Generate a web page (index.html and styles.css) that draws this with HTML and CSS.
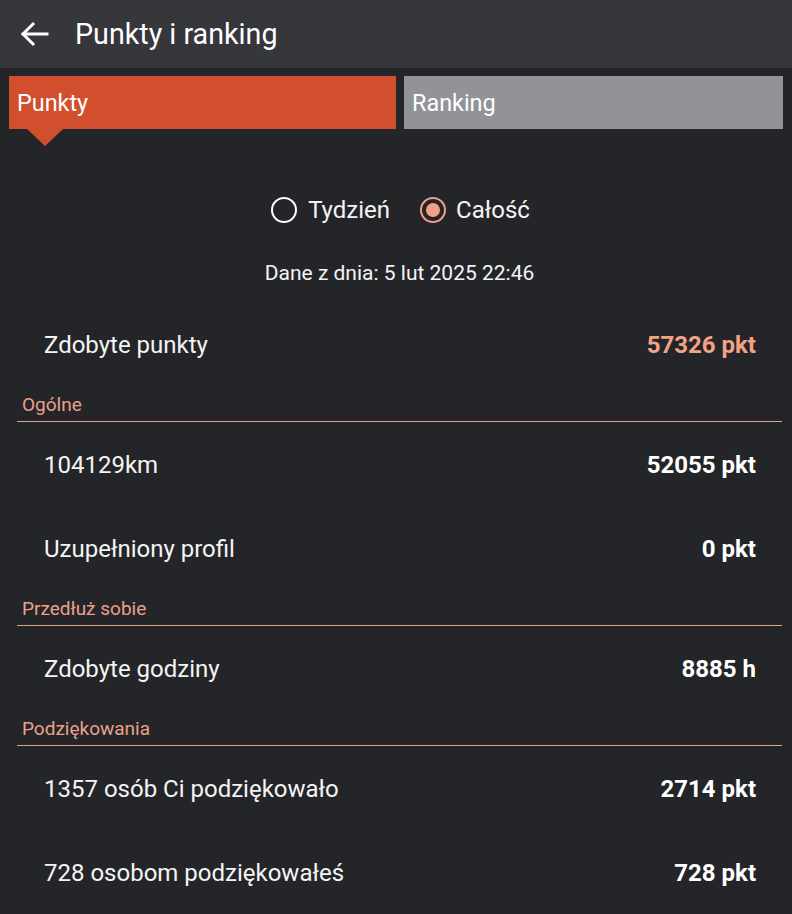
FILE: index.html
```html
<!DOCTYPE html>
<html lang="pl">
<head>
<meta charset="utf-8">
<link rel="stylesheet" href="styles.css">
</head>
<body>
<header class="appbar">
  <svg class="back" width="32" height="32" viewBox="0 0 32 32"><path d="M29 16H5M15 6L5 16l10 10" fill="none" stroke="#fff" stroke-width="3" stroke-linecap="square"/></svg>
  <h1 class="title">Punkty i ranking</h1>
</header>
<nav class="tabs">
  <div class="tab active">Punkty</div>
  <div class="tab">Ranking</div>
</nav>
<div class="radios">
  <label class="radio"><span class="circle"></span>Tydzień</label>
  <label class="radio checked"><span class="circle"></span>Całość</label>
</div>
<p class="date">Dane z dnia: 5 lut 2025 22:46</p>
<div class="row total"><span class="label">Zdobyte punkty</span><span class="value">57326 pkt</span></div>
<div class="section">Ogólne</div>
<div class="row"><span class="label">104129km</span><span class="value">52055 pkt</span></div>
<div class="row"><span class="label">Uzupełniony profil</span><span class="value">0 pkt</span></div>
<div class="section">Przedłuż sobie</div>
<div class="row"><span class="label">Zdobyte godziny</span><span class="value">8885 h</span></div>
<div class="section">Podziękowania</div>
<div class="row"><span class="label">1357 osób Ci podziękowało</span><span class="value">2714 pkt</span></div>
<div class="row"><span class="label">728 osobom podziękowałeś</span><span class="value">728 pkt</span></div>
</body>
</html>
```
FILE: styles.css
```css
html, body {
  margin: 0;
  padding: 0;
  background: #242529;
  color: #f4f4f4;
  font-family: Roboto, "Noto Sans", sans-serif;
  height: 914px;
  overflow: hidden;
}
.appbar {
  height: 68px;
  background: #36373b;
  display: flex;
  align-items: center;
  padding-left: 18px;
}
.back { display: block; }
.title {
  margin: 0 0 0 25px;
  font-weight: 400;
  font-size: 28.7px;
  color: #fff;
}
.tabs {
  display: flex;
  gap: 8px;
  padding: 8px 9px 0 9px;
}
.tab {
  flex: 1;
  height: 53px;
  display: flex;
  align-items: center;
  padding-left: 8px;
  font-size: 23.4px;
  background: #919399;
  color: #fff;
  box-sizing: border-box;
}
.tab.active {
  background: #d24f2e;
  position: relative;
  flex: 0 0 387px;
}
.tab.active::after {
  content: "";
  position: absolute;
  left: 18px;
  top: 53px;
  border-left: 18px solid transparent;
  border-right: 18px solid transparent;
  border-top: 17px solid #d24f2e;
}
.radios {
  display: flex;
  justify-content: center;
  gap: 30px;
  margin-top: 67px;
  padding-left: 9px;
  height: 28px;
  align-items: center;
}
.radio {
  display: flex;
  align-items: center;
  font-size: 24px;
  gap: 11px;
}
.checked { gap: 10px; }
.circle {
  width: 22px;
  height: 22px;
  border: 2px solid #fff;
  border-radius: 50%;
  box-sizing: content-box;
  position: relative;
}
.checked .circle {
  border-color: #f0a088;
}
.checked .circle::after {
  content: "";
  position: absolute;
  left: 4px;
  top: 4px;
  width: 14px;
  height: 14px;
  border-radius: 50%;
  background: #f4a086;
}
.date {
  margin: 37px 0 0;
  padding-left: 7px;
  text-align: center;
  font-size: 21px;
  line-height: 24px;
}
.row {
  display: flex;
  justify-content: space-between;
  align-items: center;
  height: 84px;
  padding: 0 36px 0 44px;
  font-size: 24px;
}
.value { font-weight: 700; color: #fff; }
.total { margin-top: 18px; }
.total .value { color: #f4a284; }
.section {
  margin: 7px 10px 1px 17px;
  padding: 0 0 5px 5px;
  font-size: 19px;
  color: #eba088;
  border-bottom: 1px solid #e4a48e;
  line-height: 22px;
}
```
